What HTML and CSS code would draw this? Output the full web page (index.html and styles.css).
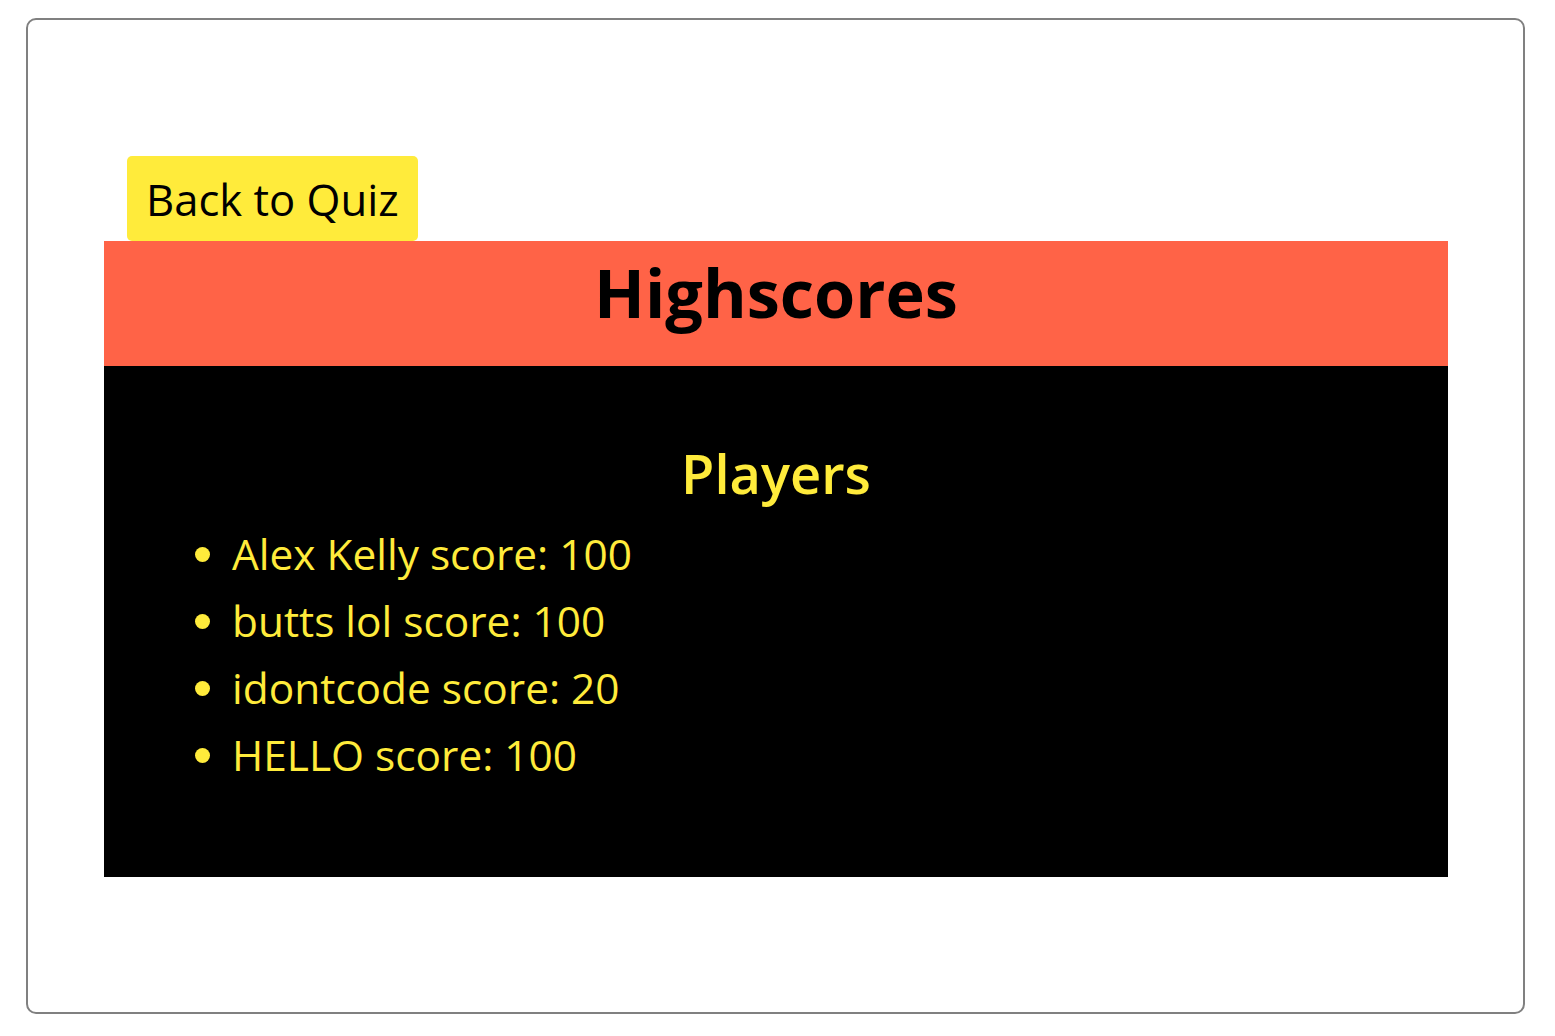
FILE: index.html
```html
<!DOCTYPE html>
<html>
<head>
<meta charset="utf-8">
<link rel="stylesheet" href="styles.css">
</head>
<body>
<div class="frame">
  <button class="back-btn">Back to Quiz</button>
  <header class="banner"><h1 class="banner-title">Highscores</h1></header>
  <section class="board">
    <h2 class="board-title">Players</h2>
    <ul class="players">
      <li>Alex Kelly score: 100</li>
      <li>butts lol score: 100</li>
      <li>idontcode score: 20</li>
      <li>HELLO score: 100</li>
    </ul>
  </section>
</div>
</body>
</html>
```

FILE: styles.css
```css
body { margin: 0; font-family: "Open Sans", sans-serif; }
.frame {
  margin: 18px 30px 22px 26px;
  border: 2px solid #808080;
  border-radius: 10px;
  padding: 136px 75px 135px 76px;
}
.back-btn {
  display: block;
  margin-left: 23px;
  width: 291px;
  height: 85px;
  border: none;
  border-radius: 5px;
  background: #ffeb3b;
  font-family: "Open Sans", sans-serif;
  font-size: 43.6px;
  text-align: left;
  padding: 0 0 0 19px;
  color: #000;
}
.banner {
  background: #ff6347;
  height: 125px;
  display: flex;
  align-items: center;
  justify-content: center;
}
.banner-title { margin: 0; font-size: 66.6px; font-weight: 700; line-height: 1; padding-bottom: 20px; }
.board { background: #000; height: 511px; box-sizing: border-box; padding-top: 67px; color: #ffeb3b; }
.board-title { margin: 0; text-align: center; font-size: 54.2px; font-weight: 600; line-height: 80px; }
.players { margin: 7px 0 0; padding-left: 128px; font-size: 42.4px; line-height: 67px; }
```
